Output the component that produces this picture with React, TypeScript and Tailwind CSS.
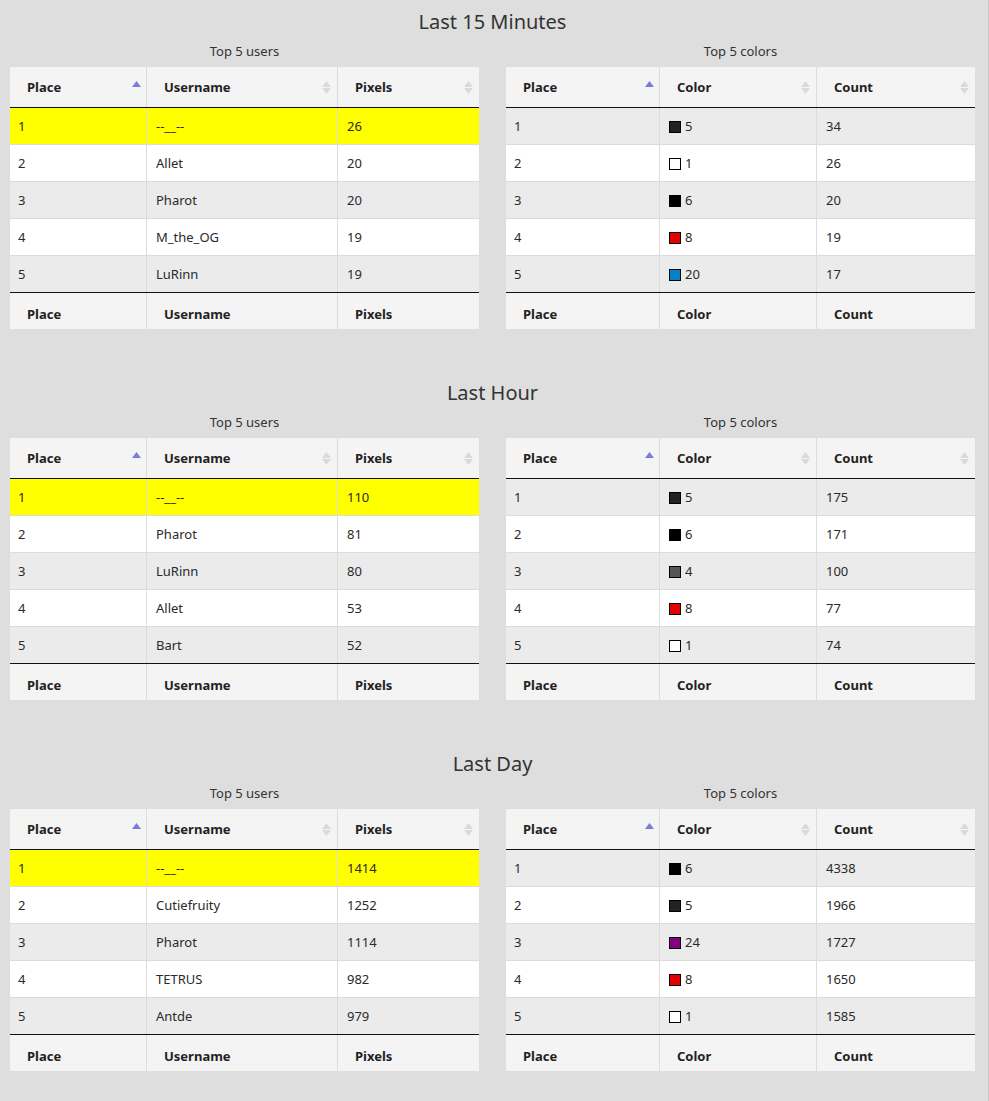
import React from "react";

type Row = { place: number; a: string; b: string; swatch?: string };

const SortUp = () => (
  <svg className="absolute right-[5px] top-[14px]" width="9" height="6" viewBox="0 0 9 6">
    <polygon points="4.5,0 9,6 0,6" fill="#7a7ae0" />
  </svg>
);

const SortBoth = () => (
  <svg className="absolute right-[6px] top-[14px]" width="9" height="13" viewBox="0 0 9 13">
    <polygon points="4.5,0 9,6 0,6" fill="#dadada" />
    <polygon points="0,7 9,7 4.5,13" fill="#dadada" />
  </svg>
);

function Table({
  caption,
  headers,
  widths,
  rows,
  highlightFirst,
}: {
  caption: string;
  headers: string[];
  widths: string[];
  rows: Row[];
  highlightFirst: boolean;
}) {
  return (
    <div className="flex w-[469px] flex-col">
      <div className="mt-[5px] h-[20px] text-center text-[13px] leading-[20px] text-[#333]">{caption}</div>
      <div className="mt-[6px] flex flex-col">
        <div className="flex h-[41px] border-b border-[#111] bg-[#f4f4f4]">
          {headers.map((h, i) => (
            <div
              key={h}
              className={`relative flex items-center pl-[17px] pt-[2px] text-[13px] font-bold text-[#222] ${widths[i]} ${i > 0 ? "border-l border-[#dcdcdc]" : ""}`}
            >
              {h}
              {i === 0 ? <SortUp /> : <SortBoth />}
            </div>
          ))}
        </div>
        {rows.map((r, ri) => {
          const bg =
            ri === 0 && highlightFirst ? "bg-[#ffff00]" : ri % 2 === 0 ? "bg-[#ebebeb]" : "bg-white";
          return (
            <div key={ri} className={`flex ${ri > 0 ? "h-[37px] border-t border-[#dcdcdc]" : "h-[36px]"} ${bg}`}>
              <div className={`flex items-center pl-[8px] pt-[2px] text-[13px] text-[#2a2a2a] ${widths[0]}`}>{r.place}</div>
              <div className={`flex items-center pl-[9px] pt-[2px] text-[13px] text-[#2a2a2a] border-l border-[#dcdcdc] ${widths[1]}`}>
                {r.swatch ? (
                  <span
                    className="mr-[4px] inline-block h-[12px] w-[12px] border border-black"
                    style={{ backgroundColor: r.swatch }}
                  />
                ) : null}
                {r.a}
              </div>
              <div className={`flex items-center pl-[9px] pt-[2px] text-[13px] text-[#2a2a2a] border-l border-[#dcdcdc] ${widths[2]}`}>
                {r.b}
              </div>
            </div>
          );
        })}
        <div className="flex h-[37px] border-t border-[#111] bg-[#f4f4f4]">
          {headers.map((h, i) => (
            <div
              key={h}
              className={`flex items-center pl-[17px] pt-[7px] text-[13px] font-bold text-[#222] ${widths[i]} ${i > 0 ? "border-l border-[#dcdcdc]" : ""}`}
            >
              {h}
            </div>
          ))}
        </div>
      </div>
    </div>
  );
}

const C = {
  "1": "#ffffff",
  "4": "#555555",
  "5": "#222222",
  "6": "#000000",
  "8": "#e50000",
  "20": "#0083c7",
  "24": "#820080",
} as Record<string, string>;

const sections: { title: string; users: [string, string][]; colors: [string, string][] }[] = [
  {
    title: "Last 15 Minutes",
    users: [
      ["--__--", "26"],
      ["Allet", "20"],
      ["Pharot", "20"],
      ["M_the_OG", "19"],
      ["LuRinn", "19"],
    ],
    colors: [
      ["5", "34"],
      ["1", "26"],
      ["6", "20"],
      ["8", "19"],
      ["20", "17"],
    ],
  },
  {
    title: "Last Hour",
    users: [
      ["--__--", "110"],
      ["Pharot", "81"],
      ["LuRinn", "80"],
      ["Allet", "53"],
      ["Bart", "52"],
    ],
    colors: [
      ["5", "175"],
      ["6", "171"],
      ["4", "100"],
      ["8", "77"],
      ["1", "74"],
    ],
  },
  {
    title: "Last Day",
    users: [
      ["--__--", "1414"],
      ["Cutiefruity", "1252"],
      ["Pharot", "1114"],
      ["TETRUS", "982"],
      ["Antde", "979"],
    ],
    colors: [
      ["6", "4338"],
      ["5", "1966"],
      ["24", "1727"],
      ["8", "1650"],
      ["1", "1585"],
    ],
  },
];

export default function App() {
  return (
    <div
      className="min-h-[1101px] w-[989px] border-r border-[#c6c6c6] bg-[#dedede] pt-[8px] pl-[10px] pr-[13px]"
      style={{ fontFamily: '"Noto Sans", "Open Sans", sans-serif' }}
    >
      <div className="flex w-[965px] flex-col gap-[50px]">
        {sections.map((s) => (
          <div key={s.title} className="flex flex-col">
            <div className="h-[28px] text-center text-[20px] leading-[28px] text-[#333]">{s.title}</div>
            <div className="flex gap-[27px]">
              <Table
                caption="Top 5 users"
                headers={["Place", "Username", "Pixels"]}
                widths={["w-[136px]", "w-[191px]", "w-[142px]"]}
                rows={s.users.map((u, i) => ({ place: i + 1, a: u[0], b: u[1] }))}
                highlightFirst={true}
              />
              <Table
                caption="Top 5 colors"
                headers={["Place", "Color", "Count"]}
                widths={["w-[153px]", "w-[157px]", "w-[159px]"]}
                rows={s.colors.map((c, i) => ({ place: i + 1, a: c[0], b: c[1], swatch: C[c[0]] }))}
                highlightFirst={false}
              />
            </div>
          </div>
        ))}
      </div>
    </div>
  );
}
